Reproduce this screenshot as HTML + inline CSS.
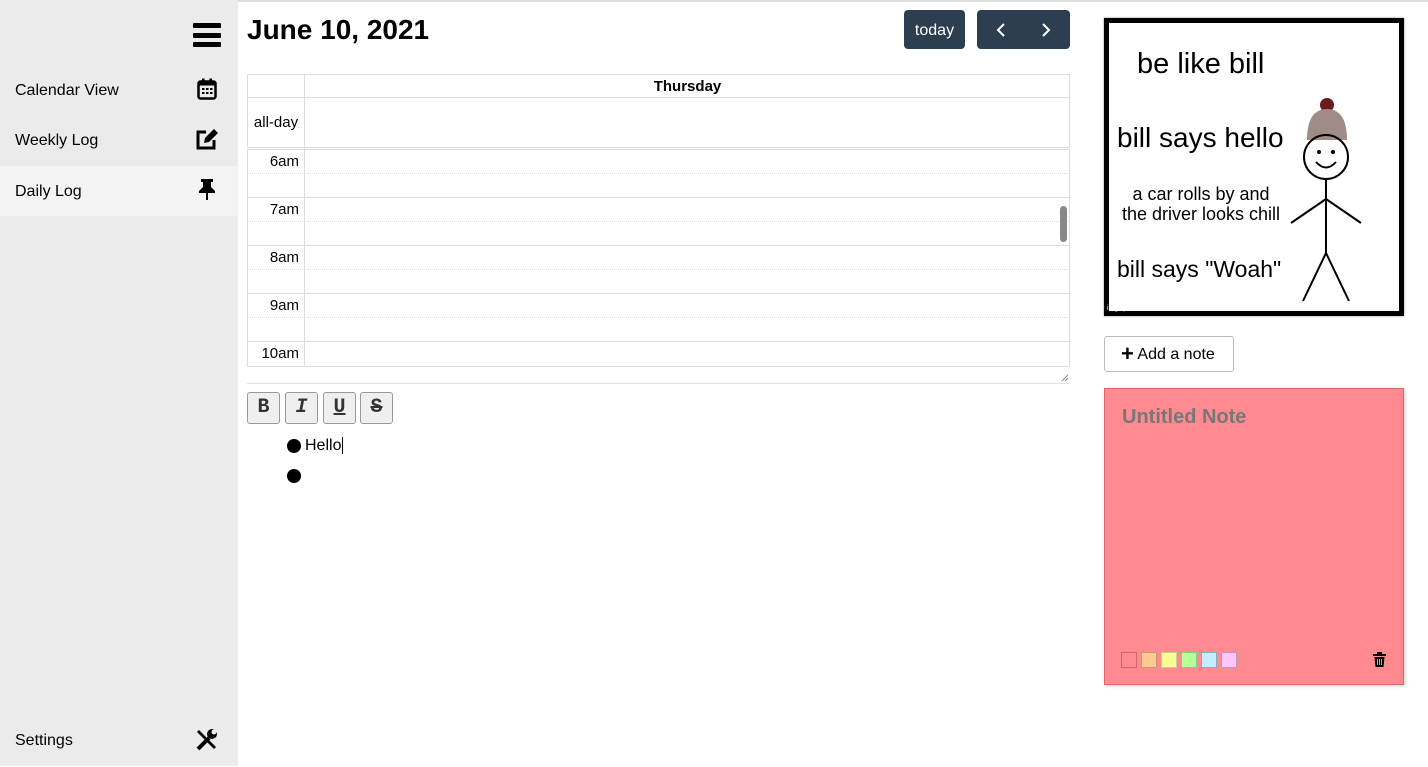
<!DOCTYPE html>
<html><head><style>
*{box-sizing:border-box;margin:0;padding:0}
body{width:1428px;height:766px;position:relative;overflow:hidden;background:#fff;font-family:"Liberation Sans",Arial,sans-serif;color:#000}
.a{position:absolute}
#side{left:0;top:0;width:238px;height:766px;background:#ebebeb}
.nav{position:absolute;left:0;width:238px;height:50px;font-size:16px;line-height:52px;padding-left:15px}
.hl{position:absolute;background:#ddd}
.btn{position:absolute;background:#2c3e50;border-radius:4px;color:#fff}
.tb{position:absolute;top:392px;width:33px;height:32px;border:1px solid #999;border-radius:3px;background:#efefef;font-family:"Liberation Mono",monospace;font-weight:bold;font-size:20px;text-align:center;line-height:30px;color:#333}
.sw{position:absolute;top:652px;width:16px;height:16px;border:1px solid}
.tl{position:absolute;left:248px;width:56px;text-align:right;font-size:15px;padding-right:5px}
</style></head><body>
<div class="a" style="left:0;top:0;width:1428px;height:2px;background:#ddd"></div>
<div id="side" class="a">
 <div class="a" style="left:193px;top:23px;width:28px;height:5px;background:#000;border-radius:1px"></div>
 <div class="a" style="left:193px;top:33px;width:28px;height:5px;background:#000;border-radius:1px"></div>
 <div class="a" style="left:193px;top:42px;width:28px;height:5px;background:#000;border-radius:1px"></div>
 <div class="nav" style="top:65px">Calendar View</div>
 <svg class="a" style="left:197px;top:78px" width="20" height="22" viewBox="0 0 20 22"><rect x="1.5" y="3.5" width="17" height="17" rx="2" fill="none" stroke="#000" stroke-width="2.5"/><rect x="1.5" y="3.5" width="17" height="4" fill="#000"/><rect x="5" y="0.5" width="2.5" height="4" fill="#000"/><rect x="12.5" y="0.5" width="2.5" height="4" fill="#000"/><g fill="#000"><rect x="5" y="10" width="2.5" height="2"/><rect x="9" y="10" width="2.5" height="2"/><rect x="13" y="10" width="2.5" height="2"/><rect x="5" y="14" width="2.5" height="2"/><rect x="9" y="14" width="2.5" height="2"/><rect x="13" y="14" width="2.5" height="2"/></g></svg>
 <div class="nav" style="top:115px">Weekly Log</div>
 <svg class="a" style="left:195px;top:128px" width="25" height="23" viewBox="0 0 25 23"><path d="M11 4H3v16h16v-8" fill="none" stroke="#000" stroke-width="3"/><path d="M9 15l1-5L19 1l4 4-9 9z" fill="#000"/></svg>
 <div class="nav" style="top:166px;background:#f3f3f3">Daily Log</div>
 <svg class="a" style="left:198px;top:178px" width="18" height="22" viewBox="0 0 18 22"><path d="M3 1h12v3h-2v5l4 4v2H1v-2l4-4V4H3z" fill="#000"/><rect x="8" y="15" width="2" height="7" fill="#000"/></svg>
 <div class="nav" style="top:715px">Settings</div>
 <svg class="a" style="left:195px;top:728px" width="24" height="24" viewBox="0 0 24 24"><path d="M3 21L14 10" stroke="#000" stroke-width="4"/><path d="M4 2l5 5-2 2-5-5z" fill="#000"/><path d="M9 7l12 12-2 2L7 9z" fill="#000"/><circle cx="17" cy="6" r="5" fill="#000"/><circle cx="19" cy="4" r="2.5" fill="#ebebeb"/></svg>
</div>

<div class="a" style="left:247px;top:14px;font-size:28px;font-weight:bold">June 10, 2021</div>
<div class="btn" style="left:904px;top:10px;width:61px;height:39px;font-size:16px;line-height:41px;text-align:center">today</div>
<div class="btn" style="left:977px;top:10px;width:93px;height:39px"></div>
<svg class="a" style="left:994px;top:21px" width="60" height="18" viewBox="0 0 60 18"><path d="M10 3l-6 6 6 6M49 3l6 6-6 6" fill="none" stroke="#fff" stroke-width="2"/></svg>

<div class="a" style="left:247px;top:74px;width:823px;height:293px;border:1px solid #ddd"></div>
<div class="hl" style="left:247px;top:97px;width:823px;height:1px"></div>
<div class="hl" style="left:247px;top:147px;width:823px;height:3px;background:#fff;border-top:1px solid #ddd;border-bottom:1px solid #ddd"></div>
<div class="hl" style="left:304px;top:74px;width:1px;height:292px"></div>
<div class="a" style="left:305px;top:78px;width:765px;text-align:center;font-weight:bold;font-size:15px">Thursday</div>
<div class="a" style="left:248px;top:114px;width:56px;text-align:center;font-size:15px">all-day</div>
<div class="hl" style="left:247px;top:197px;width:823px;height:1px"></div>
<div class="hl" style="left:247px;top:245px;width:823px;height:1px"></div>
<div class="hl" style="left:247px;top:293px;width:823px;height:1px"></div>
<div class="hl" style="left:247px;top:341px;width:823px;height:1px"></div>
<div class="a" style="left:248px;top:173px;width:821px;border-top:1px dotted #ddd"></div>
<div class="a" style="left:248px;top:221px;width:821px;border-top:1px dotted #ddd"></div>
<div class="a" style="left:248px;top:269px;width:821px;border-top:1px dotted #ddd"></div>
<div class="a" style="left:248px;top:317px;width:821px;border-top:1px dotted #ddd"></div>
<div class="tl" style="top:153px">6am</div>
<div class="tl" style="top:201px">7am</div>
<div class="tl" style="top:249px">8am</div>
<div class="tl" style="top:297px">9am</div>
<div class="tl" style="top:345px">10am</div>
<div class="a" style="left:1060px;top:206px;width:7px;height:36px;background:#888;border-radius:4px"></div>
<svg class="a" style="left:1061px;top:374px" width="8" height="8"><path d="M1 7L7 1M4 7L7 4" stroke="#888"/></svg>
<div class="hl" style="left:247px;top:383px;width:823px;height:1px;background:#e4e4e4"></div>

<div class="tb" style="left:247px">B</div>
<div class="tb" style="left:285px;font-style:italic">I</div>
<div class="tb" style="left:323px;text-decoration:underline">U</div>
<div class="tb" style="left:360px;text-decoration:line-through">S</div>
<div class="a" style="left:287px;top:439px;width:14px;height:14px;border-radius:50%;background:#000"></div>
<div class="a" style="left:305px;top:437px;font-size:16px">Hello<span style="border-left:1px solid #000;margin-left:1px"></span></div>
<div class="a" style="left:287px;top:469px;width:14px;height:14px;border-radius:50%;background:#000"></div>

<div class="a" style="left:1104px;top:18px;width:300px;height:298px;border:5px solid #000;background:#fff;box-shadow:0 0 2px #888"></div>
<div class="a" style="left:1137px;top:48px;font-size:29px">be like bill</div>
<div class="a" style="left:1117px;top:122px;font-size:28px">bill says hello</div>
<div class="a" style="left:1112px;top:184px;width:178px;text-align:center;font-size:18px;line-height:20px">a car rolls by and<br>the driver looks chill</div>
<div class="a" style="left:1117px;top:256px;font-size:23px">bill says "Woah"</div>
<div class="a" style="left:1107px;top:305px;font-size:7px;color:#fff">imgflip.com</div>
<svg class="a" style="left:1285px;top:95px" width="80" height="210" viewBox="0 0 80 210">
 <circle cx="42" cy="10" r="7" fill="#6b1a1f"/>
 <path d="M22 45 Q22 14 42 14 Q62 14 62 45z" fill="#a08c86"/>
 <circle cx="41" cy="62" r="22" fill="none" stroke="#000" stroke-width="2"/>
 <circle cx="34" cy="57" r="2" fill="#000"/><circle cx="48" cy="57" r="2" fill="#000"/>
 <path d="M31 67 Q41 78 51 67" fill="none" stroke="#000" stroke-width="2"/>
 <path d="M41 84V158M41 104L6 128M41 104L76 128M41 158L18 206M41 158L64 206" stroke="#000" stroke-width="2" fill="none"/>
</svg>

<div class="a" style="left:1104px;top:336px;width:130px;height:36px;border:1px solid #bbb;border-radius:3px;font-size:16px;line-height:34px;padding-left:16px"><b style="font-size:22px;vertical-align:-2px">+</b> Add a note</div>
<div class="a" style="left:1104px;top:388px;width:300px;height:297px;background:#ff8a8f;border:1px solid #d86a6e;box-shadow:1px 1px 3px #ccc"></div>
<div class="a" style="left:1122px;top:406px;font-size:20px;font-weight:bold;color:#777">Untitled Note</div>
<div class="sw" style="left:1121px;background:#ff8a8f;border-color:#c66"></div>
<div class="sw" style="left:1141px;background:#ffc990;border-color:#c96"></div>
<div class="sw" style="left:1161px;background:#f9ff90;border-color:#cc9"></div>
<div class="sw" style="left:1181px;background:#b4ff96;border-color:#8c8"></div>
<div class="sw" style="left:1201px;background:#c6edff;border-color:#8ab"></div>
<div class="sw" style="left:1221px;background:#ffc6ff;border-color:#b9b"></div>
<svg class="a" style="left:1373px;top:652px" width="13" height="15" viewBox="0 0 13 15"><rect x="0" y="2" width="13" height="2" fill="#000"/><rect x="4" y="0" width="5" height="2" fill="#000"/><path d="M1.5 5h10l-1 10h-8z" fill="#000"/><path d="M4.5 7v6M6.5 7v6M8.5 7v6" stroke="#ff8a8f" stroke-width="1"/></svg>
</body></html>
